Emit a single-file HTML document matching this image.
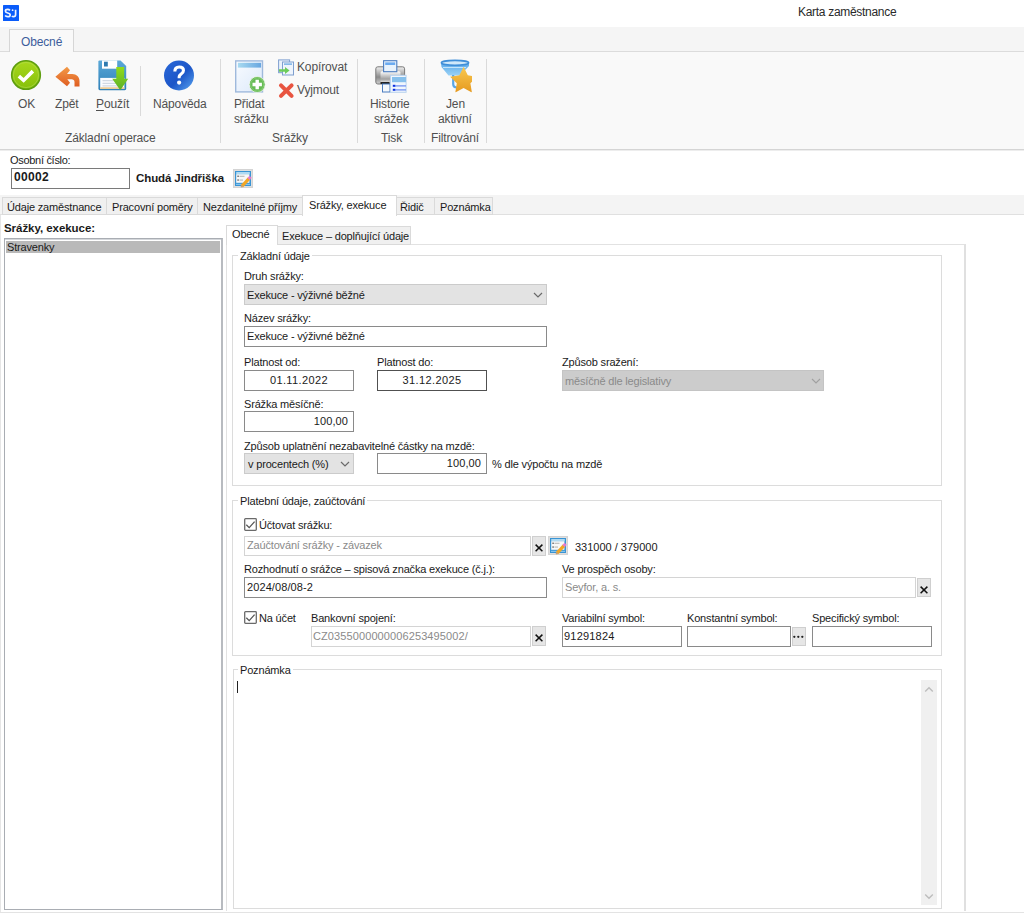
<!DOCTYPE html>
<html><head><meta charset="utf-8">
<style>
*{box-sizing:border-box;margin:0;padding:0}
html,body{width:1024px;height:913px;overflow:hidden;background:#fff}
body{position:relative;font-family:"Liberation Sans",sans-serif;font-size:11px;color:#1a1a1a}
.a{position:absolute}
.t{position:absolute;white-space:nowrap;font-size:11px;line-height:13px;letter-spacing:-0.17px}
.r{position:absolute;white-space:nowrap;font-size:12px;line-height:14px;letter-spacing:-0.14px;color:#505050}
.box{position:absolute;border:1px solid #7a7a7a;background:#fff}
.grp{position:absolute;border:1px solid #dcdcdc}
.btnx{position:absolute;background:#e6e6e6;border:1px solid #cfcfcf}
.sep{position:absolute;width:1px;background:#dadada}
</style></head><body>

<!-- title bar -->
<svg class="a" style="left:3px;top:5px" width="16" height="16" viewBox="3 5 16 16"><rect x="3" y="5" width="16" height="16" rx="0.6" fill="#0a5cfa"/>
 <path d="M10 10.3 Q9.1 9.4 7.6 9.4 Q5.4 9.4 5.4 11 Q5.4 12.5 7.7 13 Q10.2 13.5 10.2 15 Q10.2 16.7 7.6 16.7 Q5.9 16.7 5.1 15.6" stroke="#eef3ff" stroke-width="1.7" fill="none"/>
 <path d="M15.6 9.7 L15.6 14.6 Q15.6 16.7 13.6 16.7 Q12.5 16.7 11.9 16" stroke="#eef3ff" stroke-width="1.7" fill="none"/>
 <circle cx="12.6" cy="10.2" r="0.9" fill="#eef3ff"/></svg>
<div class="r" style="left:798px;top:5px;color:#2a2a2a;letter-spacing:-0.3px">Karta zaměstnance</div>

<!-- ribbon tab strip -->
<div class="a" style="left:0;top:27px;width:1024px;height:25px;background:#f5f5f5"></div>
<div class="a" style="left:0;top:51px;width:1024px;height:1px;background:#dcdcdc"></div>
<div class="a" style="left:9px;top:29px;width:65px;height:23px;background:#f9f9f9;border:1px solid #d6d6d6;border-bottom:none"></div>
<div class="r" style="left:21px;top:35px;color:#3d5d9c">Obecné</div>

<!-- ribbon body -->
<div class="a" style="left:0;top:52px;width:1024px;height:97px;background:#f9f9f9"></div>
<div class="a" style="left:0;top:149px;width:1024px;height:1px;background:#d5d5d5"></div>
<div class="a" style="left:0;top:150px;width:1024px;height:1px;background:#ededed"></div>


<!-- ribbon icons -->
<svg class="a" style="left:10px;top:59px" width="32" height="32" viewBox="0 0 32 32">
 <defs><linearGradient id="gok" x1="0" y1="0" x2="0" y2="1"><stop offset="0" stop-color="#a8d81c"/><stop offset="1" stop-color="#86c00a"/></linearGradient></defs>
 <circle cx="16" cy="16" r="14.3" fill="url(#gok)" stroke="#5e9e10" stroke-width="1.6"/>
 <circle cx="16" cy="16" r="12.6" fill="none" stroke="#b8e060" stroke-width="0.8" opacity="0.6"/>
 <path d="M10.2 18.4 L13.6 21.4 L21.6 13.4" fill="none" stroke="#fff" stroke-width="3.6" stroke-linecap="square"/>
</svg>
<svg class="a" style="left:50px;top:59px" width="34" height="32" viewBox="50 59 34 32">
 <defs><linearGradient id="gbk" x1="0" y1="0" x2="0" y2="1"><stop offset="0" stop-color="#f39a48"/><stop offset="1" stop-color="#df5e22"/></linearGradient></defs>
 <path d="M55.4 76.8 L67 66.8 L70 70.2 L67 74 L72.3 74 C76.5 74 79.5 77 79.5 81 L79.5 86.5 L74.5 86.5 L74.5 81.8 C74.5 80.3 73.3 79.3 71.6 79.3 L67.3 79.3 L70 82.7 L67 86.2 Z" fill="url(#gbk)"/>
</svg>
<svg class="a" style="left:96px;top:58px" width="34" height="34" viewBox="96 58 34 34">
 <defs><linearGradient id="gsv" x1="0" y1="0" x2="0" y2="1"><stop offset="0" stop-color="#5aa8d8"/><stop offset="1" stop-color="#2f80b8"/></linearGradient>
 <linearGradient id="gar" x1="0" y1="0" x2="0" y2="1"><stop offset="0" stop-color="#92dc1a"/><stop offset="1" stop-color="#5ab02a"/></linearGradient></defs>
 <path d="M99.5 60.4 L120.5 60.4 L126.2 66 L126.2 88.8 Q126.2 90.2 124.8 90.2 L99.8 90.2 Q98.4 90.2 98.4 88.8 L98.4 61.6 Q98.4 60.4 99.5 60.4 Z" fill="url(#gsv)"/>
 <rect x="102" y="60.4" width="15.2" height="8.3" fill="#fff"/>
 <rect x="104" y="61.7" width="3.8" height="4.8" fill="#2e7bb0"/>
 <rect x="100.2" y="77.9" width="24.2" height="11" fill="#fafcff"/>
 <rect x="102.5" y="80.2" width="18" height="1" fill="#c8d0dc"/>
 <rect x="102.5" y="82.8" width="18" height="1" fill="#c8d0dc"/>
 <rect x="102.5" y="85.4" width="18" height="1" fill="#c8d0dc"/>
 <rect x="100.2" y="87.3" width="24.2" height="1.6" fill="#eac88c"/>
 <path d="M116.3 67 L124.2 67 L124.2 78.8 L128.2 78.8 L120.3 90.2 L112.2 78.8 L116.3 78.8 Z" fill="url(#gar)"/>
</svg>
<div class="sep" style="left:140px;top:66px;height:50px"></div>
<svg class="a" style="left:162px;top:59px" width="34" height="34" viewBox="162 59 34 34">
 <defs><linearGradient id="ghl" x1="0" y1="0" x2="1" y2="1"><stop offset="0" stop-color="#2a68d8"/><stop offset="0.55" stop-color="#1c56c8"/><stop offset="1" stop-color="#5aa6f0"/></linearGradient></defs>
 <circle cx="179" cy="75.5" r="15" fill="url(#ghl)"/>
 <path d="M173.3 71.6 Q173.3 65.6 179.2 65.6 Q185 65.6 185 70.6 Q185 73.6 182 75.2 Q180.5 76.2 180.5 78.3 L177.6 78.3 Q177.4 74.6 180 73 Q181.9 71.9 181.9 70.6 Q181.9 68.4 179.2 68.4 Q176.4 68.4 176.4 71.6 Z" fill="#fff"/>
 <circle cx="179.1" cy="82.6" r="2.1" fill="#fff"/>
</svg>
<div class="sep" style="left:220px;top:59px;height:84px"></div>

<svg class="a" style="left:234px;top:59px" width="32" height="34" viewBox="234 59 32 34">
 <defs><linearGradient id="gdc" x1="0" y1="0" x2="1" y2="1"><stop offset="0" stop-color="#f8fbff"/><stop offset="1" stop-color="#dce9fa"/></linearGradient>
 <linearGradient id="gbd" x1="0" y1="0" x2="1" y2="0"><stop offset="0" stop-color="#a8daf0"/><stop offset="1" stop-color="#68a6e0"/></linearGradient></defs>
 <rect x="235.7" y="60.9" width="26.8" height="31" fill="url(#gdc)" stroke="#9fb9dc" stroke-width="1.4"/>
 <rect x="237.9" y="62.8" width="23.2" height="4.8" fill="url(#gbd)"/>
 <circle cx="257.2" cy="84.5" r="8" fill="#66bb55" stroke="#f9f9f9" stroke-width="0.8"/>
 <circle cx="257.2" cy="84.5" r="6.6" fill="none" stroke="#8ccf7a" stroke-width="0.8"/>
 <path d="M255.5 79.8 h3.4 v3 h3 v3.4 h-3 v3 h-3.4 v-3 h-3 v-3.4 h3 Z" fill="#fff"/>
</svg>
<svg class="a" style="left:277px;top:58px" width="18" height="19" viewBox="277 58 18 19">
 <rect x="278.6" y="59.9" width="11" height="12.8" fill="#eaf1fb" stroke="#7e9fcf" stroke-width="1"/>
 <rect x="282.5" y="62" width="11" height="13" fill="#eef4fc" stroke="#7e9fcf" stroke-width="1"/>
 <rect x="284" y="63.5" width="8" height="1.2" fill="#5aa0e0"/>
 <path d="M279 69.3 h6 v-2.2 l4.6 3.4 l-4.6 3.4 v-2.2 h-6 Z" fill="#6ccc5a"/>
</svg>
<svg class="a" style="left:277px;top:82px" width="18" height="17" viewBox="277 82 18 17">
 <path d="M281 85.3 L291.6 95.8 M291.6 85.3 L281 95.8" stroke="#e85440" stroke-width="4" stroke-linecap="round"/>
</svg>
<div class="sep" style="left:357px;top:59px;height:84px"></div>

<svg class="a" style="left:373px;top:59px" width="35" height="35" viewBox="373 59 35 35">
 <defs><linearGradient id="gpr" x1="0" y1="0" x2="0" y2="1"><stop offset="0" stop-color="#f0f0f0"/><stop offset="0.6" stop-color="#8a8a8a"/><stop offset="1" stop-color="#d0d0d0"/></linearGradient>
 <linearGradient id="gfp" x1="0" y1="0" x2="0" y2="1"><stop offset="0" stop-color="#ffffff"/><stop offset="0.7" stop-color="#a0a0a0"/><stop offset="1" stop-color="#e0e0e0"/></linearGradient></defs>
 <rect x="375.8" y="66.8" width="28.8" height="17.2" rx="2" fill="url(#gpr)" stroke="#7a7a7a" stroke-width="1"/>
 <rect x="380.5" y="71.3" width="20" height="11" rx="1.5" fill="url(#gfp)"/>
 <rect x="383.6" y="60.7" width="13.2" height="11" fill="#e8f2fc" stroke="#4a7cc0" stroke-width="1.1"/>
 <rect x="385.2" y="62.4" width="10" height="2.6" fill="#6aaaf0"/>
 <rect x="380.5" y="82" width="9" height="2" fill="#222"/>
 <rect x="382.5" y="84" width="7.5" height="8" fill="#f4f8fc" stroke="#4a7cc0" stroke-width="1"/>
 <rect x="390.5" y="75.3" width="15.6" height="17" fill="#f0f6fd" stroke="#b8d2ee" stroke-width="1"/>
 <rect x="392" y="77" width="14" height="5.2" fill="#86c0ec"/>
 <rect x="392.8" y="84.8" width="2.6" height="2" fill="#0a2ee0"/>
 <rect x="395" y="85.3" width="11" height="1.2" fill="#6a8cf0"/>
 <rect x="392.8" y="88.8" width="2.6" height="2" fill="#0a2ee0"/>
 <rect x="395" y="89.3" width="11" height="1.2" fill="#6a8cf0"/>
</svg>
<div class="sep" style="left:424px;top:59px;height:84px"></div>

<svg class="a" style="left:439px;top:59px" width="34" height="35" viewBox="439 59 34 35">
 <defs><linearGradient id="gfn" x1="0" y1="0" x2="0" y2="1"><stop offset="0" stop-color="#5aa8e8"/><stop offset="1" stop-color="#9ad2f6"/></linearGradient>
 <linearGradient id="gst" x1="0" y1="0" x2="0" y2="1"><stop offset="0" stop-color="#f8c850"/><stop offset="1" stop-color="#e69a20"/></linearGradient>
 <clipPath id="cst"><rect x="439" y="59" width="33" height="33.6"/></clipPath></defs>
 <path d="M441 63 L469 63 L469 66 L460 75.5 L448.5 75.5 L441.5 67 Z" fill="url(#gfn)"/>
 <path d="M443 67.5 L466 67.5" stroke="#d8f0ff" stroke-width="1" opacity="0.8"/>
 <ellipse cx="455" cy="62.8" rx="13.6" ry="2.4" fill="#cfe8fa" stroke="#3f8ed8" stroke-width="1.6"/>
 <path d="M453.2 75 L453.2 84 Q453.2 87.5 457 87.5" fill="none" stroke="#5aa6e6" stroke-width="2.2"/>
 <path d="M463.6 66.8 L467.8 75.3 L477.1 76.7 L470.4 83.2 L471.9 92.5 L463.6 88.1 L455.3 92.5 L456.8 83.2 L450.1 76.7 L459.4 75.3 Z" fill="url(#gst)" clip-path="url(#cst)"/>
</svg>
<div class="sep" style="left:486px;top:59px;height:84px"></div>

<!-- ribbon labels -->
<div class="r" style="left:18px;top:97px">OK</div>
<div class="r" style="left:55px;top:97px">Zpět</div>
<div class="r" style="left:96px;top:97px"><u style="text-decoration-thickness:1px;text-underline-offset:2px">P</u>oužít</div>
<div class="r" style="left:153px;top:97px">Nápověda</div>
<div class="r" style="left:65px;top:131px">Základní operace</div>
<div class="r" style="left:234px;top:97px">Přidat</div>
<div class="r" style="left:234px;top:112px">srážku</div>
<div class="r" style="left:297px;top:60px">Kopírovat</div>
<div class="r" style="left:297px;top:83px">Vyjmout</div>
<div class="r" style="left:272px;top:131px">Srážky</div>
<div class="r" style="left:370px;top:97px">Historie</div>
<div class="r" style="left:374px;top:112px">srážek</div>
<div class="r" style="left:381px;top:131px">Tisk</div>
<div class="r" style="left:446px;top:97px">Jen</div>
<div class="r" style="left:438px;top:112px">aktivní</div>
<div class="r" style="left:431px;top:131px">Filtrování</div>


<!-- header -->
<div class="t" style="left:10px;top:154px;letter-spacing:-0.3px">Osobní číslo:</div>
<div class="box" style="left:11px;top:168px;width:119px;height:21px;border-color:#7a7a7a"></div>
<div class="t" style="left:14px;top:171px;font-weight:bold;font-size:12px;letter-spacing:0.3px">00002</div>
<div class="t" style="left:136px;top:172px;font-weight:bold;font-size:11.5px;letter-spacing:-0.1px">Chudá Jindřiška</div>
<svg class="a" style="left:233px;top:169px" width="20" height="19" viewBox="0 0 20 19">
 <rect x="0" y="0" width="20" height="19" fill="#d4d4d4"/>
 <rect x="1.3" y="1.3" width="17.4" height="16.4" fill="#e4e4e4"/>
 <rect x="2" y="2" width="16" height="15" fill="#3994d4"/>
 <rect x="3.2" y="3" width="13.6" height="2.2" fill="#b0daf2"/>
 <rect x="3.2" y="5.2" width="13.2" height="8.6" fill="#f8f8f8"/>
 <rect x="4.3" y="6.6" width="1.6" height="1.3" fill="#666"/><rect x="6.5" y="6.8" width="5" height="0.9" fill="#aaa"/>
 <rect x="4.3" y="10.4" width="1.6" height="1.3" fill="#666"/><rect x="6.5" y="10.6" width="3.5" height="0.9" fill="#aaa"/>
 <rect x="3" y="14.8" width="14" height="1.2" fill="#86c4ec"/>
 <path d="M9 17.2 L16.2 9.4" stroke="#f2a623" stroke-width="3.2"/>
 <path d="M15.6 10 L17.6 7.8" stroke="#e27ad0" stroke-width="3"/>
 <path d="M8.2 18 L9.6 16.4" stroke="#c8a070" stroke-width="2"/>
</svg>

<!-- outer tabs -->
<div class="a" style="left:0;top:195px;width:1024px;height:20px;background:#f4f4f4"></div>
<div class="a" style="left:0;top:214px;width:1024px;height:1px;background:#e0e0e0"></div>
<div class="a" style="left:2px;top:197px;width:105px;height:18px;border:1px solid #dadada;background:#f0f0f0"></div>
<div class="a" style="left:106px;top:197px;width:92px;height:18px;border:1px solid #dadada;background:#f0f0f0"></div>
<div class="a" style="left:197px;top:197px;width:106px;height:18px;border:1px solid #dadada;background:#f0f0f0"></div>
<div class="a" style="left:396px;top:197px;width:39px;height:18px;border:1px solid #dadada;background:#f0f0f0"></div>
<div class="a" style="left:434px;top:197px;width:59px;height:18px;border:1px solid #dadada;background:#f0f0f0"></div>
<div class="a" style="left:302px;top:195px;width:95px;height:21px;border:1px solid #dadada;border-bottom:none;background:#fff"></div>
<div class="t" style="left:7px;top:201px">Údaje zaměstnance</div>
<div class="t" style="left:112px;top:201px">Pracovní poměry</div>
<div class="t" style="left:203px;top:201px">Nezdanitelné příjmy</div>
<div class="t" style="left:309px;top:199px">Srážky, exekuce</div>
<div class="t" style="left:400px;top:201px">Řidič</div>
<div class="t" style="left:440px;top:201px">Poznámka</div>

<!-- left edge & bottom -->
<div class="a" style="left:0;top:215px;width:1px;height:698px;background:#e6e6e6"></div>
<div class="a" style="left:0;top:912px;width:1024px;height:1px;background:#e3e3e3"></div>

<!-- left list -->
<div class="t" style="left:4px;top:222px;font-weight:bold;font-size:11.5px;letter-spacing:-0.05px">Srážky, exekuce:</div>
<div class="a" style="left:4px;top:238px;width:219px;height:672px;border:1px solid #a9adb3;border-right:2px solid #b8bbc0;box-shadow:inset 0 1px 0 #d4d7db;background:#fff"></div>
<div class="a" style="left:6px;top:241px;width:214px;height:12px;background:#b9b9b9"></div>
<div class="t" style="left:7px;top:241px">Stravenky</div>

<!-- inner tab control -->
<div class="a" style="left:226px;top:244px;width:740px;height:667px;border:1px solid #e2e2e2;border-right:2px solid #e0e0e0;border-bottom:none"></div>
<div class="a" style="left:277px;top:226px;width:134px;height:19px;border:1px solid #dadada;background:#f0f0f0"></div>
<div class="a" style="left:226px;top:225px;width:52px;height:20px;border:1px solid #dadada;border-bottom:none;background:#fff"></div>
<div class="t" style="left:232px;top:228px">Obecné</div>
<div class="t" style="left:282px;top:230px">Exekuce – doplňující údaje</div>

<!-- group boxes -->
<div class="grp" style="left:232px;top:255px;width:710px;height:231px"></div>
<div class="grp" style="left:232px;top:500px;width:710px;height:156px"></div>
<div class="grp" style="left:233px;top:669px;width:709px;height:240px"></div>
<div class="t" style="left:238px;top:250px;background:#fff;padding:0 2px">Základní údaje</div>
<div class="t" style="left:238px;top:495px;background:#fff;padding:0 2px">Platební údaje, zaúčtování</div>
<div class="t" style="left:238px;top:664px;background:#fff;padding:0 2px">Poznámka</div>


<!-- group 1 fields -->
<div class="t" style="left:244px;top:270px">Druh srážky:</div>
<div class="a" style="left:244px;top:284px;width:303px;height:21px;background:#e3e3e3;border:1px solid #cbcbcb"></div>
<div class="t" style="left:247px;top:289px">Exekuce - výživné běžné</div>
<svg class="a" style="left:533px;top:292px" width="10" height="6" viewBox="0 0 10 6"><path d="M1 1 L5 5 L9 1" fill="none" stroke="#6a6a6a" stroke-width="1.2"/></svg>

<div class="t" style="left:244px;top:312px">Název srážky:</div>
<div class="box" style="left:244px;top:326px;width:303px;height:21px;border-color:#8a8a8a"></div>
<div class="t" style="left:247px;top:330px">Exekuce - výživné běžné</div>

<div class="t" style="left:244px;top:356px">Platnost od:</div>
<div class="box" style="left:244px;top:370px;width:110px;height:21px;border-color:#8a8a8a"></div>
<div class="t" style="left:244px;top:374px;width:110px;text-align:center;letter-spacing:0.4px">01.11.2022</div>
<div class="t" style="left:377px;top:356px">Platnost do:</div>
<div class="box" style="left:377px;top:370px;width:110px;height:21px;border-color:#505050"></div>
<div class="t" style="left:377px;top:374px;width:110px;text-align:center;letter-spacing:0.4px">31.12.2025</div>
<div class="t" style="left:562px;top:356px">Způsob sražení:</div>
<div class="a" style="left:562px;top:370px;width:262px;height:21px;background:#cccccc;border:1px solid #c4c4c4"></div>
<div class="t" style="left:565px;top:375px;color:#8a8a8a">měsíčně dle legislativy</div>
<svg class="a" style="left:811px;top:378px" width="10" height="6" viewBox="0 0 10 6"><path d="M1 1 L5 5 L9 1" fill="none" stroke="#a0a0a0" stroke-width="1.1"/></svg>

<div class="t" style="left:244px;top:398px">Srážka měsíčně:</div>
<div class="box" style="left:244px;top:411px;width:110px;height:21px;border-color:#8a8a8a"></div>
<div class="t" style="left:244px;top:415px;width:104px;text-align:right;letter-spacing:0.1px">100,00</div>

<div class="t" style="left:244px;top:440px">Způsob uplatnění nezabavitelné částky na mzdě:</div>
<div class="a" style="left:244px;top:453px;width:110px;height:21px;background:#e3e3e3;border:1px solid #cbcbcb"></div>
<div class="t" style="left:248px;top:458px">v procentech (%)</div>
<svg class="a" style="left:340px;top:461px" width="10" height="6" viewBox="0 0 10 6"><path d="M1 1 L5 5 L9 1" fill="none" stroke="#6a6a6a" stroke-width="1.2"/></svg>
<div class="box" style="left:377px;top:453px;width:110px;height:21px;border-color:#8a8a8a"></div>
<div class="t" style="left:377px;top:457px;width:104px;text-align:right;letter-spacing:0.1px">100,00</div>
<div class="t" style="left:492px;top:458px">% dle výpočtu na mzdě</div>

<!-- group 2 fields -->
<svg class="a" style="left:244px;top:518px" width="13" height="13" viewBox="0 0 13 13"><rect x="0.7" y="0.7" width="11.6" height="11.6" rx="0.8" fill="#fff" stroke="#6a6a6a" stroke-width="1.3"/><path d="M2.3 6.8 L5.2 9.6 L10.6 3.6" fill="none" stroke="#555" stroke-width="1.3"/></svg>
<div class="t" style="left:259px;top:519px">Účtovat srážku:</div>
<div class="box" style="left:244px;top:536px;width:287px;height:20px;border-color:#d4d4d4"></div>
<div class="t" style="left:247px;top:539px;color:#8a8a8a">Zaúčtování srážky - závazek</div>
<div class="btnx" style="left:532px;top:536px;width:14px;height:20px"></div>
<svg class="a" style="left:534px;top:541px" width="10" height="12" viewBox="0 0 10 12"><path d="M1.6 3.6 L8.4 10.2 M8.4 3.6 L1.6 10.2" stroke="#111" stroke-width="1.5"/></svg>
<svg class="a" style="left:548px;top:536px" width="20" height="19" viewBox="0 0 20 19">
 <rect x="0" y="0" width="20" height="19" fill="#d4d4d4"/>
 <rect x="1.3" y="1.3" width="17.4" height="16.4" fill="#e4e4e4"/>
 <rect x="2" y="2" width="16" height="15" fill="#3994d4"/>
 <rect x="3.2" y="3" width="13.6" height="2.2" fill="#b0daf2"/>
 <rect x="3.2" y="5.2" width="13.2" height="8.6" fill="#f8f8f8"/>
 <rect x="4.3" y="6.6" width="1.6" height="1.3" fill="#666"/><rect x="6.5" y="6.8" width="5" height="0.9" fill="#aaa"/>
 <rect x="4.3" y="10.4" width="1.6" height="1.3" fill="#666"/><rect x="6.5" y="10.6" width="3.5" height="0.9" fill="#aaa"/>
 <rect x="3" y="14.8" width="14" height="1.2" fill="#86c4ec"/>
 <path d="M9 17.2 L16.2 9.4" stroke="#f2a623" stroke-width="3.2"/>
 <path d="M15.6 10 L17.6 7.8" stroke="#e27ad0" stroke-width="3"/>
 <path d="M8.2 18 L9.6 16.4" stroke="#c8a070" stroke-width="2"/>
</svg>
<div class="t" style="left:575px;top:541px;letter-spacing:0px">331000 / 379000</div>

<div class="t" style="left:244px;top:563px">Rozhodnutí o srážce – spisová značka exekuce (č.j.):</div>
<div class="box" style="left:244px;top:577px;width:303px;height:21px;border-color:#8a8a8a"></div>
<div class="t" style="left:247px;top:581px;letter-spacing:0.1px">2024/08/08-2</div>
<div class="t" style="left:562px;top:563px">Ve prospěch osoby:</div>
<div class="box" style="left:562px;top:577px;width:354px;height:21px;border-color:#d4d4d4"></div>
<div class="t" style="left:565px;top:581px;color:#8a8a8a">Seyfor, a. s.</div>
<div class="btnx" style="left:917px;top:578px;width:14px;height:19px"></div>
<svg class="a" style="left:919px;top:583px" width="10" height="12" viewBox="0 0 10 12"><path d="M1.6 3.6 L8.4 10.2 M8.4 3.6 L1.6 10.2" stroke="#111" stroke-width="1.5"/></svg>

<svg class="a" style="left:244px;top:611px" width="13" height="13" viewBox="0 0 13 13"><rect x="0.7" y="0.7" width="11.6" height="11.6" rx="0.8" fill="#fff" stroke="#6a6a6a" stroke-width="1.3"/><path d="M2.3 6.8 L5.2 9.6 L10.6 3.6" fill="none" stroke="#555" stroke-width="1.3"/></svg>
<div class="t" style="left:259px;top:612px">Na účet</div>
<div class="t" style="left:311px;top:612px">Bankovní spojení:</div>
<div class="box" style="left:311px;top:626px;width:220px;height:21px;border-color:#d4d4d4"></div>
<div class="t" style="left:313px;top:630px;color:#8a8a8a;letter-spacing:0.1px">CZ0355000000006253495002/</div>
<div class="btnx" style="left:532px;top:626px;width:14px;height:20px"></div>
<svg class="a" style="left:534px;top:631px" width="10" height="12" viewBox="0 0 10 12"><path d="M1.6 3.6 L8.4 10.2 M8.4 3.6 L1.6 10.2" stroke="#111" stroke-width="1.5"/></svg>

<div class="t" style="left:562px;top:612px">Variabilní symbol:</div>
<div class="box" style="left:562px;top:626px;width:120px;height:21px;border-color:#8a8a8a"></div>
<div class="t" style="left:564px;top:630px;letter-spacing:0.2px">91291824</div>
<div class="t" style="left:687px;top:612px">Konstantní symbol:</div>
<div class="box" style="left:687px;top:626px;width:104px;height:21px;border-color:#8a8a8a"></div>
<div class="btnx" style="left:792px;top:627px;width:14px;height:19px"></div>
<svg class="a" style="left:792px;top:634px" width="13" height="6" viewBox="0 0 13 6"><circle cx="2.3" cy="2.8" r="1.15" fill="#222"/><circle cx="6.3" cy="2.8" r="1.15" fill="#222"/><circle cx="10.3" cy="2.8" r="1.15" fill="#222"/></svg>
<div class="t" style="left:812px;top:612px">Specifický symbol:</div>
<div class="box" style="left:812px;top:626px;width:120px;height:21px;border-color:#8a8a8a"></div>

<!-- poznamka -->
<div class="a" style="left:237px;top:681px;width:1px;height:12px;background:#222"></div>
<div class="a" style="left:921px;top:680px;width:16px;height:225px;background:#f0f0f0"></div>
<svg class="a" style="left:924px;top:686px" width="10" height="7" viewBox="0 0 10 7"><path d="M1.2 5.5 L5 1.7 L8.8 5.5" fill="none" stroke="#bdbdbd" stroke-width="1.4"/></svg>
<svg class="a" style="left:924px;top:893px" width="10" height="7" viewBox="0 0 10 7"><path d="M1.2 1.5 L5 5.3 L8.8 1.5" fill="none" stroke="#bdbdbd" stroke-width="1.4"/></svg>

</body></html>
